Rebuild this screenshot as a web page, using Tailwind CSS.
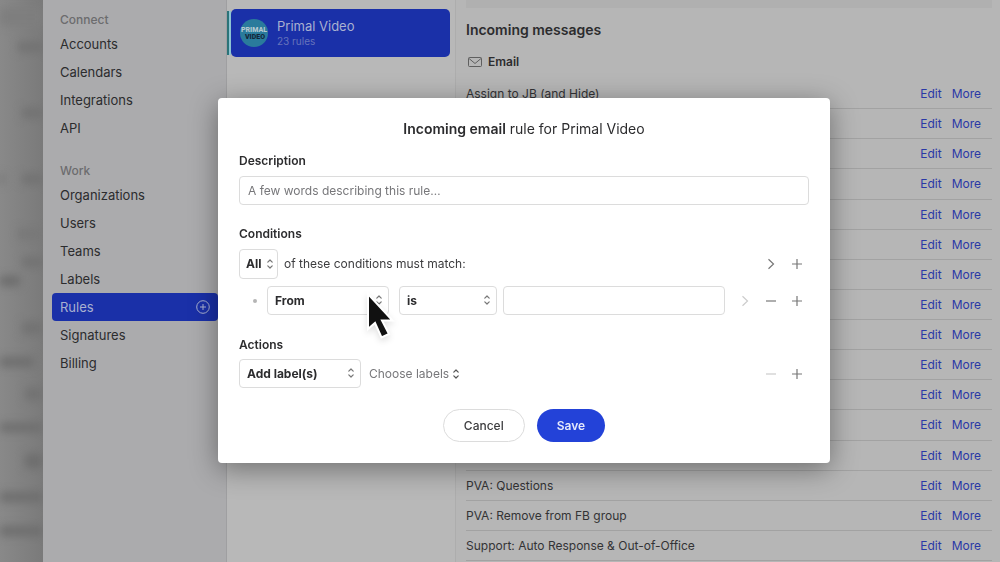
<!DOCTYPE html>
<html lang="en">
<head>
    <meta charset="UTF-8">
    <meta name="viewport" content="width=device-width, initial-scale=1.0">
    <title>Rules - Primal Video</title>
    <script src="https://cdn.jsdelivr.net/npm/@tailwindcss/browser@4"></script>
</head>
<body class="font-[Inter,sans-serif] text-[13px] text-[#2c2c2e]">
    <!-- Icons -->
    <svg class="hidden">
        <symbol id="updown" viewBox="0 0 8 12"><path d="M1.8 4.2 4 2 6.200 4.200M1.800 7.800 4 10 6.200 7.800" fill="none" stroke="currentColor" stroke-width="1.2" stroke-linecap="round" stroke-linejoin="round"/></symbol>
        <symbol id="plus" viewBox="0 0 12 12"><path d="M6 1v10M1 6h10" fill="none" stroke="currentColor" stroke-width="1.2"/></symbol>
        <symbol id="minus" viewBox="0 0 12 12"><path d="M1 6h10" fill="none" stroke="currentColor" stroke-width="1.2"/></symbol>
        <symbol id="next" viewBox="0 0 12 12"><path d="M3.500 1.200 8.500 6 3.500 10.800" fill="none" stroke="currentColor" stroke-width="1.2"/></symbol>
    </svg>

    <div class="flex h-screen overflow-hidden">
        <!-- Desktop behind the window -->
        <div class="w-[43px] shrink-0 overflow-hidden bg-linear-to-r from-[#898989] to-[#7a7a7a]">
            <svg class="size-full blur-[4px]" viewBox="0 0 43 562" preserveAspectRatio="none" fill="#727272">
                <rect y="8" width="43" height="18" fill="#7e7e7e"/>
                <rect x="18" y="42" width="25" height="10"/>
                <rect x="22" y="108" width="21" height="10"/>
                <rect x="22" y="174" width="21" height="10"/>
                <rect y="174" width="4" height="10"/>
                <rect x="18" y="228" width="25" height="12" fill="#787878"/>
                <rect x="22" y="257" width="21" height="10"/>
                <rect y="276" width="20" height="10" fill="#6c6c6c"/>
                <rect x="22" y="322" width="21" height="12"/>
                <rect y="357" width="34" height="10" fill="#6e6e6e"/>
                <rect x="25" y="388" width="18" height="12"/>
                <rect y="423" width="43" height="9" fill="#6e6e6e"/>
                <rect x="25" y="454" width="18" height="14" fill="#6e6e6e"/>
                <rect y="492" width="43" height="10" fill="#6e6e6e"/>
                <rect y="526" width="43" height="10" fill="#6e6e6e"/>
            </svg>
        </div>

        <!-- Sidebar -->
        <nav class="w-[184px] shrink-0 border-r border-[#9f9fa1] bg-[#ababad] pt-2.5 pr-2 pl-[9px]">
            <h2 class="px-2 text-xs leading-5 font-medium text-[#6c6c6e]">Connect</h2>
            <ul class="leading-7">
                <li><a href="#" class="block px-2">Accounts</a></li>
                <li><a href="#" class="block px-2">Calendars</a></li>
                <li><a href="#" class="block px-2">Integrations</a></li>
                <li><a href="#" class="block px-2">API</a></li>
            </ul>
            <h2 class="mt-[19px] px-2 text-xs leading-5 font-medium text-[#6c6c6e]">Work</h2>
            <ul class="leading-7">
                <li><a href="#" class="block px-2">Organizations</a></li>
                <li><a href="#" class="block px-2">Users</a></li>
                <li><a href="#" class="block px-2">Teams</a></li>
                <li><a href="#" class="block px-2">Labels</a></li>
                <li>
                    <a href="#" class="flex items-center justify-between rounded-sm bg-[#1a30a8] px-2 text-[#a9b0d0]">Rules
                        <svg class="size-3.5" viewBox="0 0 14 14" fill="none" stroke="currentColor"><circle cx="7" cy="7" r="6.3"/><path d="M7 4v6M4 7h6"/></svg>
                    </a>
                </li>
                <li><a href="#" class="block px-2">Signatures</a></li>
                <li><a href="#" class="block px-2">Billing</a></li>
            </ul>
        </nav>

        <!-- Organizations -->
        <section class="w-[229px] shrink-0 border-r border-[#adadad] bg-[#b8b8b8] pt-[9px]">
            <a href="#" class="flex h-12 pr-[5px]">
                <span class="my-0.5 w-1 border-l-2 border-[#2b7378] bg-[#8cc4d2]"></span>
                <span class="flex flex-1 items-center gap-[9px] rounded-[5px] bg-[#1a30a8] px-[9px]">
                    <svg class="size-7" viewBox="0 0 28 28" font-family="Roboto, sans-serif" font-weight="900" font-size="7" text-anchor="middle">
                        <circle cx="14" cy="14" r="14" fill="#2a7b9c"/>
                        <text x="14" y="13" fill="#b4c8d0">PRIMAL</text>
                        <text x="15" y="20" fill="#14273a">VIDEO</text>
                    </svg>
                    <span>
                        <span class="block leading-4 text-[#a9b0d0]">Primal Video</span>
                        <span class="block text-[10px] leading-3.5 text-[#6673bb]">23 rules</span>
                    </span>
                </span>
            </a>
        </section>

        <!-- Rules -->
        <main class="flex min-w-0 flex-1 flex-col bg-[#b6b6b6] pr-2 pb-px pl-2.5">
            <div class="h-2 shrink-0 bg-[#b0b0b0]"></div>
            <h1 class="mt-3 text-sm leading-5 font-semibold">Incoming messages</h1>
            <h2 class="mt-3 mb-[7px] flex items-center gap-[6px] pl-0.5 text-xs leading-5 font-semibold">
                <svg class="h-2.5 w-3.5" viewBox="0 0 14 10" fill="none" stroke="#555" stroke-width="0.9"><rect x="0.5" y="0.5" width="13" height="9" rx="1"/><path d="M1 1.5 7 6.500 13 1.500"/></svg>
                Email
            </h2>
            <ul id="rules" class="flex min-h-0 flex-1 flex-col text-xs"></ul>
        </main>
    </div>

    <!-- Rule dialog -->
    <div class="fixed inset-0 flex items-center justify-center pb-px pl-12">
        <form role="dialog" aria-labelledby="title" class="w-[612px] rounded-sm bg-white p-[21px] text-xs shadow-[0_6px_28px_rgba(0,0,0,0.4)]">
            <h2 id="title" class="text-center text-sm leading-5"><b class="font-semibold">Incoming email</b> rule for Primal Video</h2>

            <label for="description" class="mt-3 block leading-5 font-semibold">Description</label>
            <input id="description" type="text" placeholder="A few words describing this rule…" class="mt-[5px] block h-[29px] w-full rounded-sm border border-[#dcdcdc] px-2 placeholder:text-[#77777a]">

            <h3 class="mt-[19px] leading-5 font-semibold">Conditions</h3>
            <div class="mt-[5px] flex items-center text-[#777]">
                <div class="relative text-[#2c2c2e]">
                    <select aria-label="Match" class="h-[30px] w-[39px] appearance-none rounded-sm border border-[#dcdcdc] pl-1.5 font-bold"><option>All</option></select>
                    <svg class="pointer-events-none absolute top-[9px] right-1 h-3 w-2 text-[#777]"><use href="#updown"/></svg>
                </div>
                <span class="ml-1.5 flex-1 text-[#3c3c3e]">of these conditions must match:</span>
                <div class="flex gap-3.5 pr-1.5">
                    <button type="button" aria-label="Group"><svg class="size-3"><use href="#next"/></svg></button>
                    <button type="button" aria-label="Add condition"><svg class="size-3"><use href="#plus"/></svg></button>
                </div>
            </div>
            <div class="mt-[7px] flex items-center text-[#777]">
                <span class="mr-2.5 ml-3.5 size-1 rounded-full bg-[#b5b5b5]"></span>
                <div class="relative text-[#2c2c2e]">
                    <select aria-label="Field" class="h-[29px] w-[122px] appearance-none rounded-sm border border-[#dcdcdc] pl-[7px] font-bold"><option>From</option></select>
                    <svg class="pointer-events-none absolute top-2 right-1.5 h-3 w-2 text-[#777]"><use href="#updown"/></svg>
                </div>
                <div class="relative ml-2.5 text-[#2c2c2e]">
                    <select aria-label="Operator" class="h-[29px] w-[98px] appearance-none rounded-sm border border-[#dcdcdc] pl-[7px] font-bold"><option>is</option></select>
                    <svg class="pointer-events-none absolute top-2 right-1.5 h-3 w-2 text-[#777]"><use href="#updown"/></svg>
                </div>
                <input aria-label="Value" type="text" class="mr-3.5 ml-1.5 h-[29px] min-w-0 flex-1 rounded-sm border border-[#dcdcdc] px-2">
                <div class="flex gap-3.5 pr-1.5">
                    <button type="button" aria-label="Group" class="text-[#ccc]" disabled><svg class="size-3"><use href="#next"/></svg></button>
                    <button type="button" aria-label="Remove condition"><svg class="size-3"><use href="#minus"/></svg></button>
                    <button type="button" aria-label="Add condition"><svg class="size-3"><use href="#plus"/></svg></button>
                </div>
            </div>

            <h3 class="mt-5 leading-5 font-semibold">Actions</h3>
            <div class="mt-1 flex items-center text-[#777]">
                <div class="relative text-[#2c2c2e]">
                    <select aria-label="Action" class="h-[29px] w-[122px] appearance-none rounded-sm border border-[#dcdcdc] pl-[7px] font-bold"><option>Add label(s)</option></select>
                    <svg class="pointer-events-none absolute top-2 right-1.5 h-3 w-2 text-[#777]"><use href="#updown"/></svg>
                </div>
                <button type="button" class="ml-2 flex items-center gap-[3px] text-[#77777a]">Choose labels <svg class="h-3 w-2 text-[#555]"><use href="#updown"/></svg></button>
                <div class="ml-auto flex gap-3.5 pr-1.5">
                    <button type="button" aria-label="Remove action" class="text-[#ccc]" disabled><svg class="size-3"><use href="#minus"/></svg></button>
                    <button type="button" aria-label="Add action"><svg class="size-3"><use href="#plus"/></svg></button>
                </div>
            </div>

            <div class="mt-[21px] flex justify-center gap-3">
                <button type="button" class="h-[33px] rounded-full border border-[#dcdcdc] px-5 font-medium text-[#3c3c3e]">Cancel</button>
                <button type="submit" class="h-[33px] rounded-full bg-[#2342d8] px-5 font-semibold text-[#e4e8fb]">Save</button>
            </div>
        </form>
    </div>

    <!-- Mouse pointer -->
    <svg class="pointer-events-none fixed top-[290px] left-[364px] h-[52px] w-8 drop-shadow-md" viewBox="0 0 32 52">
        <path d="M4 4v35l7-6 6.500 14.500 7.500-3.500-7-13.500h10.500z" fill="#111" stroke="#fff" stroke-width="2"/>
    </svg>

    <script>
        const rules = ['Assign to JB (and Hide)', '', '', '', '', '', '', '', '', '', '', '', '', 'PVA: Questions', 'PVA: Remove from FB group', 'Support: Auto Response & Out-of-Office'];
        for (const name of rules) {
            const li = document.createElement('li');
            li.className = 'flex min-h-0 flex-1 items-center gap-2.5 border-b border-[#a2a2a2] pt-px pr-[11px] text-[#333335]';
            li.innerHTML = '<span class="flex-1"></span><a href="#" class="text-[#2a38a6]">Edit</a><a href="#" class="text-[#2a38a6]">More</a>';
            li.firstChild.textContent = name;
            document.getElementById('rules').append(li);
        }
    </script>
</body>
</html>
